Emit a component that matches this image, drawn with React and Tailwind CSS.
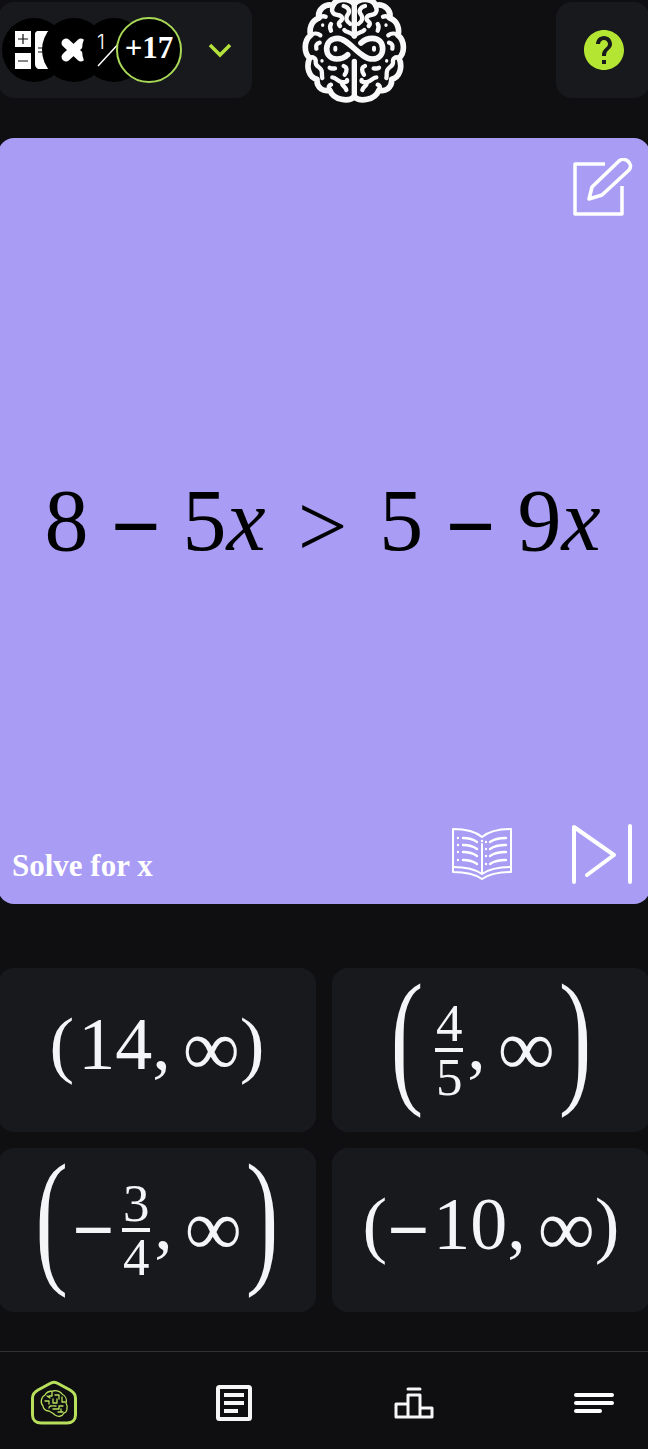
import React, { useState } from "react";

const BrainHalf = () => (
  <g>
    {/* outer lobes */}
    <path
      d="M178 12 C162 -8 122 -6 114 16 C90 10 66 30 72 54 C48 62 42 88 47 106 C26 122 26 160 44 174 C32 202 42 232 66 238 C64 264 86 276 104 270 C116 302 162 306 178 290"
      strokeWidth="17"
    />
    {/* folds */}
    <path d="M114 20 C106 34 116 44 128 45 C144 47 144 58 136 64 C130 69 130 72 135 78" />
    <path d="M146 18 C162 22 166 34 158 44 C150 56 156 66 166 72" />
    <path d="M148 90 C154 98 168 96 178 108" />
    <path d="M72 54 C78 49 84 47 92 50" />
    <path d="M108 72 C104 78 104 84 108 92" />
    <path d="M47 106 C56 98 68 100 76 106" />
    <path d="M74 128 C64 130 62 138 64 146" />
    <path d="M44 174 C54 168 64 176 62 186 C60 200 80 202 80 214 C82 222 80 228 82 234" />
    <path d="M104 203 C108 206 114 206 120 205" />
    <path d="M146 198 C158 202 156 214 149 224" />
    <path d="M112 232 C124 232 128 246 140 246 C150 248 158 246 156 240" />
    <path d="M140 248 C142 260 150 258 154 270" />
    <path d="M104 270 C98 262 102 256 108 254" />
    <path d="M83 75 V76 M81 182 V183" strokeWidth="10" />
  </g>
);

const BrainLogo = () => (
  <svg
    viewBox="0 0 360 330"
    className="w-[120px] h-[110px]"
    fill="none"
    stroke="#f8f8f8"
    strokeWidth="13"
    strokeLinecap="round"
    strokeLinejoin="round"
    role="img"
    aria-label="Brain"
  >
    <BrainHalf />
    <g transform="matrix(-1 0 0 1 356 0)">
      <BrainHalf />
    </g>
    <path d="M178 0 V108 M178 184 V292" strokeWidth="16" />
    <path
      d="M158 164 C148 174 138 177 125 177 C106 177 95 163 95 146 C95 128 108 115 128 115 C162 115 194 177 232 177 C252 177 263 163 263 146 C263 128 252 115 232 115 C216 115 206 121 198 129"
      strokeWidth="17"
    />
    <path d="M121 143 V149 M237 143 V149" strokeWidth="12" />
  </svg>
);

const MathIcon = () => (
  <svg viewBox="0 0 64 64" className="w-16 h-16">
    <path d="M13 13 H29 V29 H13 Z M13 35 H29 V51 H13 Z" fill="#fff" />
    <path d="M35 13 H56 V51 H36 C34 50 33 48 33 46 V15 Z" fill="#fff" />
    <path
      d="M16 21 H26 M21 16 V26 M16 43 H26 M36 30 H44 M36 34 H44"
      stroke="#111"
      strokeWidth="1.2"
    />
  </svg>
);

const TimesIcon = () => (
  <svg viewBox="0 0 64 64" className="w-16 h-16">
    <path
      d="M24 25 L39 39 M39 25 L24 39"
      stroke="#fff"
      strokeWidth="9"
      strokeLinecap="round"
    />
  </svg>
);

const FractionIcon = () => (
  <svg viewBox="0 0 64 64" className="w-16 h-16">
    <text
      x="15"
      y="31"
      fill="#fff"
      className="font-['Inter',sans-serif] text-xl font-light"
    >
      1
    </text>
    <path d="M16 48 L40 22" stroke="#fff" strokeWidth="1.5" />
  </svg>
);

const EditIcon = () => (
  <svg
    viewBox="2 0 60 60"
    className="w-15 h-15"
    fill="none"
    stroke="#fff"
    strokeWidth="4"
    strokeLinejoin="round"
  >
    <path d="M34 6 H4 V56 H51 V28" strokeWidth="3.5" />
    <path
      d="M18 41 L21 29 L48 3 C54 -2 63 6 58 12 L31 37 Z"
      strokeWidth="3.6"
    />
  </svg>
);

const BookIcon = () => (
  <svg
    viewBox="0 0 62 60"
    className="w-[62px] h-15"
    fill="none"
    stroke="#fff"
    strokeWidth="2.4"
    strokeLinecap="round"
    strokeLinejoin="round"
  >
    <path
      d="M2 5 C12 5 24 7 31 13 C38 7 50 5 60 5 V48 C50 48 38 50 31 55 C24 50 12 48 2 48 Z"
      strokeWidth="2"
    />
    <path
      d="M2 43 C12 43 24 45 31 50 C38 45 50 43 60 43 M31 20 V49"
      strokeWidth="2"
    />
    <path d="M12 14 C17 14 22 15 26 18 M12 21 C17 21 22 22 26 25 M12 28 C17 28 22 29 26 32 M12 36 C17 36 22 37 26 40" />
    <path d="M55 14 C49 14 43 15 39 18 M55 21 C49 21 43 22 39 25 M55 28 C49 28 43 29 39 32 M55 36 C49 36 43 37 39 40" />
    <path
      d="M7 14 V14.1 M7 21 V21.1 M7 28 V28.1 M7 36 V36.1 M35 18 V18.1 M35 25 V25.1 M35 32 V32.1 M35 40 V40.1 M31 17 V17.1"
      strokeWidth="2.4"
    />
  </svg>
);

const SkipIcon = () => (
  <svg
    viewBox="0 0 62 60"
    className="w-[62px] h-15"
    fill="none"
    stroke="#fff"
    strokeWidth="4"
    strokeLinecap="round"
    strokeLinejoin="round"
  >
    <path d="M3 58 V3 L43 31 L16 51 M59 2 V58" />
  </svg>
);

const HomeIcon = () => (
  <svg
    viewBox="0 0 46 46"
    className="w-[46px] h-[46px]"
    fill="none"
    stroke="#b9e05c"
    strokeLinecap="round"
    strokeLinejoin="round"
  >
    <path
      d="M19 3.5 L7 10 C3.500 12 1.500 14 1.500 18 V35 C1.500 40 5 43 10 43 H36 C41 43 44.500 40 44.500 35 V18 C44.500 14 42.500 12 39 10 L27 3.500 C24 1.500 22 1.500 19 3.500 Z"
      strokeWidth="3"
    />
    <g strokeWidth="1.3">
      <path d="M14 15 C16 11 20 11 22 11 C26 10 30 12 31 14 C35 16 36 20 35 23 C38 28 35 33 33 33 C31 37 27 37 24 35 C22 33 20 32 18 31 C14 31 12 28 12 26 C9 23 10 17 14 15 Z" />
      <path d="M16 16 L19 18 M21 12 V16 H18 M24 15 H28 V19 M14 21 H18 V24 M22 19 V23 H26 V19 M31 17 V22 H34 M18 28 C18 25 22 26 25 26 M22 29 H28 V26 H32 M27 32 H32 M30 29 V32" />
    </g>
  </svg>
);

const ListIcon = () => (
  <svg
    viewBox="0 0 36 36"
    className="w-9 h-9"
    fill="none"
    stroke="#f6f6f6"
    strokeWidth="4"
    strokeLinejoin="round"
  >
    <rect x="2" y="2" width="32" height="32" rx="1.500" />
    <path d="M8 10 H28 M8 18 H28 M8 26 H22" />
  </svg>
);

const PodiumIcon = () => (
  <svg
    viewBox="0 0 40 32"
    className="w-10 h-8"
    fill="none"
    stroke="#f6f6f6"
    strokeWidth="3"
    strokeLinecap="round"
    strokeLinejoin="round"
  >
    <path d="M14 2 H26 M14 30 V8 H26 V30 M14 17 H2 V30 H38 V21 H26" />
  </svg>
);

const MenuIcon = () => (
  <svg
    viewBox="0 0 40 20"
    className="w-10 h-5"
    fill="none"
    stroke="#fff"
    strokeWidth="4"
    strokeLinecap="round"
  >
    <path d="M2 2 H38 M2 10 H38 M2 18 H26" />
  </svg>
);

const TallParen = ({ children }) => (
  <math className="font-['DejaVu_Math_TeX_Gyre',serif]">
    <mrow>
      <mo stretchy="true" minsize="130px">
        {children}
      </mo>
    </mrow>
  </math>
);

const Fraction = ({ top, bottom }) => (
  <span className="flex flex-col items-center gap-[7px] text-[53px] leading-9">
    <span>{top}</span>
    <span className="h-1 w-7 bg-[#f4f5f7]" />
    <span>{bottom}</span>
  </span>
);

const answers = [
  { id: "a", value: "14" },
  { id: "b", top: "4", bottom: "5" },
  { id: "c", sign: "−", top: "3", bottom: "4" },
  { id: "d", sign: "−", value: "10" },
];

const Answer = ({ answer, selected, onSelect }) => (
  <button
    type="button"
    aria-pressed={selected}
    onClick={onSelect}
    className="flex h-[164px] items-center justify-center rounded-2xl bg-[#18191d] text-[74px] leading-none text-[#f4f5f7]"
  >
    {answer.top ? (
      <>
        <TallParen>(</TallParen>
        {answer.sign && <span className="font-bold">{answer.sign}</span>}
        <span className="ml-2">
          <Fraction top={answer.top} bottom={answer.bottom} />
        </span>
        <span className="ml-1 pb-3">,</span>
        <span className="ml-3 pb-1 text-[80px]">∞</span>
        <TallParen>)</TallParen>
      </>
    ) : (
      <>
        <span className="pb-3">(</span>
        {answer.sign && <span className="font-bold">{answer.sign}</span>}
        <span className="ml-1 pb-3">{answer.value},</span>
        <span className="ml-3 pb-1 text-[80px]">∞</span>
        <span className="pb-3">)</span>
      </>
    )}
  </button>
);

const navItems = [
  { label: "Home", Icon: HomeIcon },
  { label: "Lessons", Icon: ListIcon },
  { label: "Leaderboard", Icon: PodiumIcon },
  { label: "Menu", Icon: MenuIcon },
];

export default function App() {
  const [selected, setSelected] = useState(null);

  return (
    <div className="flex min-h-screen flex-col overflow-hidden bg-[#0f0f11] font-['Liberation_Serif',serif]">
      <div className="-mx-0.5 flex flex-1 flex-col">
        <header className="mt-0.5 flex h-24">
          <button
            type="button"
            aria-label="Choose topics"
            className="flex w-[254px] items-center rounded-2xl bg-[#18191d] pl-1"
          >
            <span className="rounded-full bg-black">
              <MathIcon />
            </span>
            <span className="-ml-6 rounded-full bg-black">
              <TimesIcon />
            </span>
            <span className="-ml-6 rounded-full bg-black">
              <FractionIcon />
            </span>
            <span className="-ml-[30px] flex h-[66px] w-[66px] items-center justify-center rounded-full border-2 border-[#a9d856] bg-black pb-1 text-[31px] font-bold text-white">
              +17
            </span>
            <svg
              viewBox="0 0 24 16"
              className="ml-[26px] h-4 w-6"
              fill="none"
              stroke="#b4e13c"
              strokeWidth="3.500"
            >
              <path d="M2 3 L12 13 L22 3" />
            </svg>
          </button>
          <div className="-mt-0.5 ml-[43px]">
            <BrainLogo />
          </div>
          <button
            type="button"
            aria-label="Help"
            className="ml-auto flex w-[94px] items-center justify-center rounded-2xl bg-[#18191d] pl-0.5"
          >
            <svg viewBox="2 2 20 20" className="h-10 w-10" fill="#b4e532">
              <path d="M12 2C6.480 2 2 6.480 2 12s4.480 10 10 10 10-4.480 10-10S17.520 2 12 2zm1 17h-2v-2h2v2zm2.070-7.750l-.9.920C13.450 12.900 13 13.500 13 15h-2v-.5c0-1.100.450-2.100 1.170-2.830l1.240-1.260c.370-.360.590-.860.590-1.410 0-1.100-.9-2-2-2s-2 .9-2 2H8c0-2.210 1.790-4 4-4s4 1.790 4 4c0 .880-.360 1.680-.930 2.250z" />
            </svg>
          </button>
        </header>

        <main className="mt-10 flex flex-1 flex-col">
          <section className="flex flex-1 flex-col rounded-2xl bg-[#a99cf4] py-5 pr-[17px] pl-[14px]">
            <div className="flex justify-end">
              <button type="button" aria-label="Scratchpad">
                <EditIcon />
              </button>
            </div>
            <div className="flex flex-1 items-center justify-center text-[88px] leading-none text-black">
              <span>8</span>
              <span className="mx-[22px] pt-3 font-bold">−</span>
              <span>
                5<i>x</i>
              </span>
              <span className="mx-8 pt-3">&gt;</span>
              <span>5</span>
              <span className="mx-[22px] pt-3 font-bold">−</span>
              <span>
                9<i>x</i>
              </span>
            </div>
            <div className="flex items-end">
              <h1 className="text-[31px] leading-9 font-bold text-white">
                Solve for x
              </h1>
              <button type="button" aria-label="Lesson" className="ml-auto">
                <BookIcon />
              </button>
              <button type="button" aria-label="Skip" className="ml-[58px]">
                <SkipIcon />
              </button>
            </div>
          </section>

          <div className="mt-16 mb-[39px] grid grid-cols-2 gap-4">
            {answers.map((answer) => (
              <Answer
                key={answer.id}
                answer={answer}
                selected={selected === answer.id}
                onSelect={() => setSelected(answer.id)}
              />
            ))}
          </div>
        </main>
      </div>

      <nav className="flex h-[98px] items-center justify-between border-t border-[#323235] px-[31px] pt-1">
        {navItems.map(({ label, Icon }) => (
          <a
            key={label}
            href="#"
            aria-label={label}
            className="flex w-[46px] items-center justify-center"
          >
            <Icon />
          </a>
        ))}
      </nav>
    </div>
  );
}
